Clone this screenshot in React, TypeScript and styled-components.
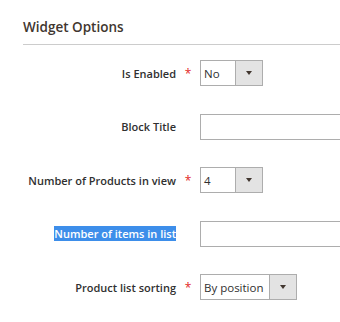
import React from "react";
import styled, { createGlobalStyle } from "styled-components";

const GlobalStyle = createGlobalStyle`
  body {
    margin: 0;
    background: #fff;
    font-family: "Open Sans", "Noto Sans", sans-serif;
    color: #303030;
    overflow: hidden;
  }
`;

const Page = styled.div`
  width: 340px;
  height: 322px;
  overflow: hidden;
`;

const Heading = styled.h2`
  margin: 0 0 0 23px;
  padding-top: 17px;
  height: 27px;
  border-bottom: 1px solid #cccccc;
  font-size: 13.5px;
  line-height: 20px;
  font-weight: 600;
  color: #41362f;
`;

const Form = styled.div`
  display: grid;
  grid-template-columns: 176px 24px 1fr;
  row-gap: 27.5px;
  padding-top: 15px;
`;

const Label = styled.label`
  display: flex;
  align-items: center;
  justify-content: flex-end;
  height: 26px;
  font-size: 11px;
  font-weight: 600;
  color: #303030;
  white-space: nowrap;
`;

const Selected = styled.span`
  background: #3d8eea;
  color: #ffffff;
`;

const Required = styled.span<{ $on: boolean }>`
  display: flex;
  align-items: center;
  justify-content: center;
  height: 26px;
  color: #e22626;
  font-size: 12px;
  visibility: ${(p) => (p.$on ? "visible" : "hidden")};
`;

const TextInput = styled.div`
  width: 160px;
  height: 26px;
  box-sizing: border-box;
  border: 1px solid #adadad;
  background: #fff;
`;

const Select = styled.div<{ $width: number }>`
  display: flex;
  width: ${(p) => p.$width}px;
  height: 26px;
  box-sizing: border-box;
  border: 1px solid #adadad;
  background: #fff;
`;

const SelectValue = styled.span`
  flex: 1;
  display: flex;
  align-items: center;
  padding-left: 3px;
  font-size: 11.5px;
  color: #303030;
  white-space: nowrap;
`;

const Arrow = styled.span`
  width: 26px;
  display: flex;
  align-items: center;
  justify-content: center;
  background: #e3e3e3;
  border-left: 1px solid #adadad;

  &::after {
    content: "";
    border-left: 3px solid transparent;
    border-right: 3px solid transparent;
    border-top: 4px solid #41362f;
  }
`;

type Field = {
  label: string;
  required: boolean;
  select?: { value: string; width: number };
  selected?: boolean;
};

const fields: Field[] = [
  { label: "Is Enabled", required: true, select: { value: "No", width: 63 } },
  { label: "Block Title", required: false },
  { label: "Number of Products in view", required: true, select: { value: "4", width: 63 } },
  { label: "Number of items in list", required: false, selected: true },
  { label: "Product list sorting", required: true, select: { value: "By position", width: 97 } },
];

export default function App() {
  return (
    <Page>
      <GlobalStyle />
      <Heading>Widget Options</Heading>
      <Form>
        {fields.map((f) => (
          <React.Fragment key={f.label}>
            <Label>{f.selected ? <Selected>{f.label}</Selected> : f.label}</Label>
            <Required $on={f.required}>*</Required>
            {f.select ? (
              <Select $width={f.select.width}>
                <SelectValue>{f.select.value}</SelectValue>
                <Arrow />
              </Select>
            ) : (
              <TextInput />
            )}
          </React.Fragment>
        ))}
      </Form>
    </Page>
  );
}
